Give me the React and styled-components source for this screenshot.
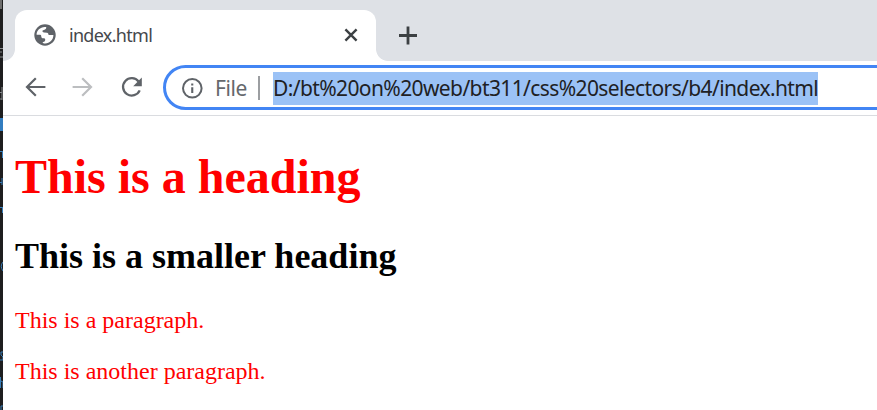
import React from "react";
import styled, { createGlobalStyle } from "styled-components";

const GlobalStyle = createGlobalStyle`
  * { box-sizing: border-box; }
  body { margin: 0; background: #fff; overflow: hidden; }
`;

const Screen = styled.div`
  display: flex;
  width: 877px;
  height: 410px;
  overflow: hidden;
`;

const EditorEdge = styled.div`
  flex: 0 0 3px;
  height: 410px;
  background: #1e1e1f;
  svg { display: block; }
`;

const Browser = styled.div`
  flex: 1;
  min-width: 0;
  display: flex;
  flex-direction: column;
  background: #fff;
`;

const TabStrip = styled.div`
  display: flex;
  align-items: flex-end;
  height: 61px;
  background: #dee1e6;
`;

const TabFoot = styled.div`
  width: 12px;
  height: 12px;
  background: radial-gradient(
    circle at ${({ $side }) => ($side === "left" ? "0 0" : "100% 0")},
    transparent 11.5px,
    #fff 12.3px
  );
`;

const Tab = styled.div`
  display: flex;
  align-items: center;
  width: 361px;
  height: 51px;
  padding: 0 17px 0 18px;
  border-radius: 12px 12px 0 0;
  background: #fff;
`;

const TabTitle = styled.span`
  flex: 1;
  margin: -2px 0 0 12px;
  font: 18px/24px "Noto Sans", sans-serif;
  letter-spacing: -0.7px;
  color: #45484c;
`;

const Icon = styled.svg`
  display: block;
  flex: none;
`;

const NewTab = styled.div`
  display: flex;
  align-items: center;
  height: 51px;
  margin-left: 10px;
`;

const Toolbar = styled.div`
  display: flex;
  align-items: center;
  height: 55px;
  padding: 0 0 0 20px;
  border-bottom: 1px solid #dadce0;
`;

const NavButtons = styled.div`
  display: flex;
  gap: 24px;
  flex: none;
`;

const AddressBar = styled.div`
  display: flex;
  align-items: center;
  flex: none;
  width: 760px;
  height: 45px;
  margin: 0 0 1px 20px;
  padding: 1px 0 0 15px;
  border: 3px solid #4285f4;
  border-radius: 23px;
  background: #fff;
`;

const Scheme = styled.span`
  width: 31px;
  margin-left: 12px;
  font: 21px/33px "Noto Sans", sans-serif;
  letter-spacing: -0.4px;
  white-space: nowrap;
  color: #65686c;
`;

const Divider = styled.span`
  width: 2px;
  height: 24px;
  margin: 0 13px 0 12px;
  background: #9c9ea1;
`;

const Url = styled.span`
  width: 545px;
  height: 33px;
  font: 21px/33px "Noto Sans", sans-serif;
  letter-spacing: -0.61px;
  white-space: nowrap;
  color: #202124;
  background: #9bc2f6;
`;

const Page = styled.main`
  padding: 0 12px;
  font-family: "Liberation Serif", serif;
`;

const Heading = styled.h1`
  margin: 33px 0 0;
  font-size: 48px;
  line-height: 55px;
  color: #f00;
`;

const Subheading = styled.h2`
  margin: 32px 0 0;
  font-size: 36px;
  line-height: 41px;
  color: #000;
`;

const Paragraph = styled.p`
  margin: ${({ $gap }) => $gap}px 0 0;
  font-size: 24px;
  line-height: 27px;
  color: #f00;
`;

const Globe = () => (
  <Icon width="24" height="24" viewBox="0 0 24 24">
    <circle cx="12" cy="11" r="10.7" fill="#5f6368" />
    <path
      fill="#fff"
      d="M13.2 3.1C13.4 4.6 12.8 5.3 11.5 5.8L9.6 6.5c-.5 1 .2 1.9 1.5 2l2.9.3c1.1.2 1.5 1 1.6 2.3h4.8c0 4.9-3.8 8.4-8.2 8.5-1.5 0-2.4-.5-2.6-1.6 1.9.2 2.7-.8 2.6-2.4 0-1-.7-1.3-1.9-1.4-1.5 0-2-.8-2.1-2.3-.1-.9-.7-1.1-1.6-1.1h-3C3.5 6.2 8 2.2 13.2 3.1Z"
    />
  </Icon>
);

const Arrow = ({ color, flip }) => (
  <Icon width="24" height="24" viewBox="0 0 24 24">
    <path
      d={flip ? "M1.6 11h18M11.2 2.2 20 11l-8.8 8.8" : "M22.4 11h-18M12.8 2.2 4 11l8.8 8.8"}
      fill="none"
      stroke={color}
      strokeWidth="2.2"
    />
  </Icon>
);

const Reload = () => (
  <Icon width="24" height="24" viewBox="0 0 24 24">
    <path d="M19.6 5.5A8.7 8.7 0 1 0 20.7 14.4" fill="none" stroke="#5f6368" strokeWidth="2.3" />
    <path d="M22.8 1.6v8.6h-8.6z" fill="#5f6368" />
  </Icon>
);

const Info = () => (
  <Icon width="22" height="22" viewBox="0 0 22 22">
    <circle cx="11.3" cy="11.3" r="9.3" fill="none" stroke="#5f6368" strokeWidth="2" />
    <path d="M10.2 10.2h2.1v5.9h-2.1zM10.2 6.5h2.1v2h-2.1z" fill="#5f6368" />
  </Icon>
);

const EditorSliver = () => (
  <svg width="3" height="410" viewBox="0 0 3 410">
    <path d="M0 0h2v9H0z" fill="#6d6d6d" />
    <path d="M0 48.5h3M0 52h2M0 57h3M0 92.5h2M0 99h2M2 87v13" stroke="#85888b" fill="none" />
    <path d="M0 118h3v13H0z" fill="#327dc0" />
    <path
      d="M0 151.5h3M2.5 152v6M0 182.5h2M2 178v7M0 207.5h3M2.5 208v5M3 262Q-.5 266 3 271M3 352H1v3l2 2v3H0M.5 377v11M1 381l2 1v6M3 406H1v4"
      stroke="#397db7"
      fill="none"
    />
  </svg>
);

export default function App() {
  return (
    <>
      <GlobalStyle />
      <Screen>
        <EditorEdge><EditorSliver /></EditorEdge>
        <Browser>
          <TabStrip>
            <TabFoot $side="left" />
            <Tab>
              <Globe />
              <TabTitle>index.html</TabTitle>
              <Icon width="16" height="16" viewBox="0 0 16 16">
                <path d="m2.4 1.4 11.2 11.2m0-11.2L2.4 12.6" stroke="#3c4043" strokeWidth="2.4" />
              </Icon>
            </Tab>
            <TabFoot $side="right" />
            <NewTab>
              <Icon width="20" height="20" viewBox="0 0 20 20">
                <path d="M10 .5v18M1 9.5h18" stroke="#3c4043" strokeWidth="2.8" />
              </Icon>
            </NewTab>
          </TabStrip>
          <Toolbar>
            <NavButtons>
              <Arrow color="#5f6368" />
              <Arrow color="#bcbec0" flip />
              <Reload />
            </NavButtons>
            <AddressBar>
              <Info />
              <Scheme>File</Scheme>
              <Divider />
              <Url>D:/bt%20on%20web/bt311/css%20selectors/b4/index.html</Url>
            </AddressBar>
          </Toolbar>
          <Page>
            <Heading>This is a heading</Heading>
            <Subheading>This is a smaller heading</Subheading>
            <Paragraph $gap={30}>This is a paragraph.</Paragraph>
            <Paragraph $gap={24}>This is another paragraph.</Paragraph>
          </Page>
        </Browser>
      </Screen>
    </>
  );
}
